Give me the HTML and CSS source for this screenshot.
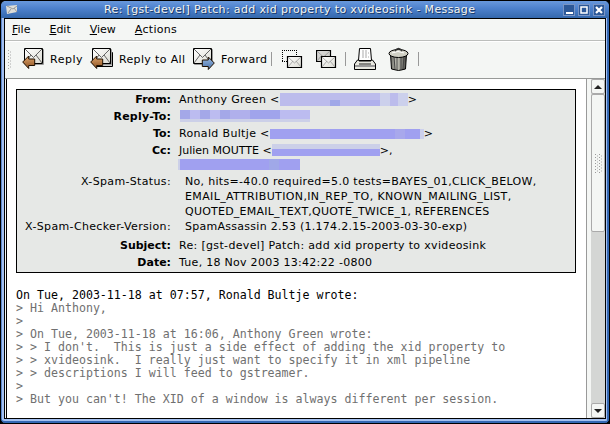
FILE: index.html
```html
<!DOCTYPE html>
<html lang="en"><head><meta charset="utf-8"><title>Message</title><link rel="stylesheet" href="styles.css"></head>
<body>
<svg class="defs"><defs>
<linearGradient id="paper" x2="1" y2="1"><stop stop-color="#fff"/><stop offset="1" stop-color="#dcdcd4"/></linearGradient>
<linearGradient id="brown" x2="0" y2="1"><stop stop-color="#e0a870"/><stop offset="1" stop-color="#8c5020"/></linearGradient>
<linearGradient id="blue" x2="0" y2="1"><stop stop-color="#9cbce4"/><stop offset="1" stop-color="#4870a8"/></linearGradient>
<linearGradient id="can"><stop stop-color="#666660"/><stop offset=".4" stop-color="#c8c8bc"/><stop offset="1" stop-color="#484844"/></linearGradient>
<g id="mail"><path d="M1.500 1.500h18v15h-18z" fill="none" stroke="#999"/><path d="M.5.5h18v15H.5z" fill="url(#paper)" stroke="#000"/><path d="M1 1l8.500 8.500L18 1M1 15l6-8M18 15l-6-8" fill="none" stroke="#555" stroke-width=".9"/></g>
<g id="small"><path d="M.5.500h14v11H.5z" fill="url(#paper)" stroke="#000" stroke-width="1.200"/><path d="M1 1l6.500 6L14 1M1 11l5-6M14 11L9 5" fill="none" stroke="#999" stroke-width=".8"/></g>
<path id="left" d="M.7 7l6-6v3h6v6.500h-6v3z" stroke="#201000"/>
</defs></svg>
<div class="window">
<header class="title"><svg class="tiny" width="12" height="9"><path d="M0 1l11-1v7L1 9z" fill="#deded8"/><path d="M1 1l6 3 4-3M2 8l3-4M11 7L8 3" stroke="#999" fill="none"/></svg><span class="caption">Re: [gst-devel] Patch: add xid property to xvideosink - Message</span>
<div class="controls"><b><svg width="12" height="12"><path d="M3 8h7v2H3z" fill="#fff"/></svg></b><b><svg width="12" height="12"><path d="M3 3h6v6H3z" stroke="#fff" stroke-width="1.500" fill="none"/></svg></b><b><svg width="12" height="12"><path d="M3 3l6 6M9 3l-6 6" stroke="#fff" stroke-width="2.200"/></svg></b></div></header>
<div class="inside">
<nav class="menu"><span><u>F</u>ile</span><span><u>E</u>dit</span><span><u>V</u>iew</span><span class="act"><u>A</u>ctions</span></nav>
<div class="toolbar"><svg class="grip" width="4" height="19"><path d="M.5 0v19" stroke="#aaa" stroke-dasharray="1 2"/><path d="M2.500 1.500v17" stroke="#aaa" stroke-dasharray="1 2"/></svg>
<svg class="i1" width="22" height="23"><use href="#mail" x="2"/><use href="#left" y="7" fill="url(#brown)"/></svg><span class="t1">Reply</span>
<svg class="i2" width="24" height="23"><path d="M6.500 4.500h16v14h-16z" fill="#ccc" stroke="#000"/><path d="M4.500 2.500h16v14h-16z" fill="#ddd" stroke="#000"/><use href="#mail" x="2"/><use href="#left" y="7" fill="url(#brown)"/></svg><span class="t2">Reply to All</span>
<svg class="i3" width="23" height="23"><use href="#mail"/><use href="#left" transform="translate(22 8) scale(-1 1)" fill="url(#blue)"/></svg><span class="t3">Forward</span>
<i class="sep s1"></i>
<svg class="i4" width="21" height="19"><path d="M0 .500h15M0 11.500h5M.500 0v12M14.500 0v6" fill="none" stroke="#000" stroke-dasharray="1 1" shape-rendering="crispEdges"/><use href="#small" x="5" y="6"/></svg>
<svg class="i5" width="21" height="19"><use href="#small"/><path d="M1 1h13v10H1z" fill="#888" opacity=".3"/><use href="#small" x="5" y="6"/></svg>
<i class="sep s2"></i>
<svg class="i6" width="23" height="23"><path d="M5.500.5h11l1 12h-13z" fill="#fff" stroke="#000"/><path d="M8 3h6M8 5h7M8 7h6M8 9h7" stroke="#aaa" stroke-dasharray="2 1"/><path d="M3.500 12h1.500v1h12v-1h1.500l3 4v5.500H.5V16z" fill="#e8e8e0" stroke="#000"/><path d="M1 17h20v2H1z" fill="#999"/><path d="M5 16h12" stroke="#222"/></svg>
<svg class="i7" width="22" height="25"><path d="M2.500 7h16l-1 15q-7 3-14 0z" fill="url(#can)" stroke="#000"/><path d="M6 10l1 12M9 10v13M13 10v13M16 9l-1 13" stroke="#444"/><ellipse cx="10.500" cy="6.500" rx="9.500" ry="4" fill="#d0d0c4" stroke="#000"/><path d="M4 6q6-3 12 0" fill="none" stroke="#fff"/><path d="M7 4q3.500-5 7 0" fill="none" stroke="#333" stroke-width="1.500"/></svg>
<i class="sep s3"></i></div>
<main class="view"><article class="message">
<section class="headers">
<b>From:</b><p class="wide">Anthony Green &lt;<i class="mask m1"></i>&gt;</p>
<b class="reply">Reply-To:</b><p><i class="mask m2"></i></p>
<b>To:</b><p class="wide">Ronald Bultje &lt;<i class="mask m3"></i>&gt;</p>
<b>Cc:</b><p>Julien MOUTTE &lt;<i class="mask m4"></i>&gt;,</p>
<b></b><p><i class="mask m5"></i></p>
<span>X-Spam-Status:</span><p class="extra"><span class="e1">No, hits=-40.0 required=5.0 tests=BAYES_01,CLICK_BELOW,</span><br><span class="e2">EMAIL_ATTRIBUTION,IN_REP_TO, KNOWN_MAILING_LIST,</span><br><span class="e3">QUOTED_EMAIL_TEXT,QUOTE_TWICE_1, REFERENCES</span></p>
<span>X-Spam-Checker-Version:</span><p class="extra e4">SpamAssassin 2.53 (1.174.2.15-2003-03-30-exp)</p>
<b>Subject:</b><p class="subject">Re: [gst-devel] Patch: add xid property to xvideosink</p>
<b>Date:</b><p class="date">Tue, 18 Nov 2003 13:42:22 -0800</p>
</section>
<pre><span>On Tue, 2003-11-18 at 07:57, Ronald Bultje wrote:</span>
&gt; Hi Anthony,
&gt;
&gt; On Tue, 2003-11-18 at 16:06, Anthony Green wrote:
&gt; &gt; I don't.  This is just a side effect of adding the xid property to
&gt; &gt; xvideosink.  I really just want to specify it in xml pipeline
&gt; &gt; descriptions I will feed to gstreamer.
&gt;
&gt; But you can't! The XID of a window is always different per session.</pre>
</article>
<aside class="scroll"><i class="arrow up"></i><div class="thumb"><svg width="7" height="19"><path d="M.5 0v19M4.500 0v19" stroke="#999" stroke-dasharray="1 2"/><path d="M2.500 1.500v17M6.500 1.500v17" stroke="#aaa" stroke-dasharray="1 2"/></svg></div><i class="arrow down"></i></aside></main>
</div></div></body></html>
```
FILE: styles.css
```css
*{box-sizing:border-box}
body{margin:0;background:#000;font:11px/17px "DejaVu Sans",sans-serif;color:#000}
.defs{position:absolute;width:0;height:0}
svg{display:block;flex:none}
.window{width:610px;height:424px;border:1px solid #000;border-radius:6px 6px 5px 5px;background:linear-gradient(90deg,#5c88cc 0 1px,#a4c0f0 1px 4px,#a4c0f0 606px,#3468b4 606px);display:flex;flex-direction:column;overflow:hidden;box-shadow:inset 0 -2px #3468b4}
.title{height:17px;background:linear-gradient(#6898dc,#4c80cc 45%,#3468ac);display:flex;align-items:center;color:#f4f4f0;text-shadow:1px 1px #183868;flex:none}
.tiny{margin-left:5px}
.caption{margin-left:86px;width:374px;white-space:nowrap;letter-spacing:.355px}
.controls{display:flex;gap:3px;margin-left:auto;margin-right:4px}
.controls b{width:12px;height:12px;background:#2c5898;border:1px solid #7894c4}
.controls svg{margin:-1px}
.inside{margin:0 3px;border:1px solid #000;height:401px;background:#f4f6f4;display:flex;flex-direction:column;flex:none}
.menu{height:22px;border-bottom:1px solid #bcbebc;display:flex;padding:2px 0 0 7px;gap:19px;flex:none}
.act{letter-spacing:.3px}
.toolbar{height:38px;border-bottom:1px solid #989a98;display:flex;align-items:center;flex:none;border-top:1px solid #fff;padding-bottom:2px}
.grip{margin-left:3px}
.i1{margin-left:10px}.t1{margin-left:6px;width:34px;letter-spacing:.5px}.i2{margin-left:6px}.t2{margin-left:5px;width:66px;letter-spacing:.35px}.i3{margin-left:8px}.t3{margin-left:5px;width:46px;letter-spacing:.3px}
.sep{width:1px;height:14px;background:#999}.s1{margin-left:4px}.i4{margin-left:10px}.i5{margin-left:13px}.s2{margin-left:8px}.i6{margin-left:8px}.i7{margin-left:11px}.s3{margin-left:8px}
.toolbar span{white-space:nowrap}
.view{flex:1;display:flex;padding-left:1px;min-height:0}
.message{width:581px;border-left:1px solid #000;border-right:1px solid #999;background:#fff;padding:10px 9px}
.headers{width:560px;height:184px;border:1px solid #000;background:#e6e8e6;display:grid;grid-template-columns:154px 1fr;column-gap:8px;grid-template-rows:17px 17px 17px 17px 13px 45px 20px 17px 17px;padding-top:1px}
.headers>b,.headers>span{text-align:right}
.reply{letter-spacing:.2px}
.headers p{margin:0;white-space:nowrap}
.headers p.wide{letter-spacing:.34px}
.headers>span,.headers .extra{line-height:15px;position:relative;top:2px}
.headers>span{letter-spacing:.35px}
.headers .extra{padding-left:6px}
.e1{letter-spacing:.315px}.e2{letter-spacing:.37px}.e3{letter-spacing:.22px}.headers .e4{letter-spacing:.27px}
.headers .subject{letter-spacing:.33px}.headers .date{letter-spacing:.28px}
.mask{display:inline-block;height:13px;vertical-align:top;margin-top:2px;background:#bcbcec}
.m1{width:128px;background:linear-gradient(90deg,transparent 0 50px,#a0a8e8 50px 60px,transparent 60px 80px,#b0b0ec 80px 100px,transparent 100px) 0 7px/100% 6px no-repeat,linear-gradient(90deg,#bcbcec 0 100px,#ccd0ec 100px 110px,#bcbcec 110px 118px,#ccd0ec 118px)}
.m2{width:130px;height:12px;margin-left:1px;background:linear-gradient(transparent 0 9px,#ccd0e8 9px),linear-gradient(90deg,#a4a8e8 0 10px,#bcbcf0 10px 20px,#a4a8e8 20px 30px,#bcbcf0 30px 40px,#a4a8e8 40px 50px,#b0b0ec 50px 70px,#a0a4ec 70px 100px,#bcbcf0 100px)}
.m3{width:154px;height:10px;margin-top:4px;background:linear-gradient(90deg,#a0a0f0 0 50px,#a8a8ec 50px 60px,#a0a0f0 60px 125px,#a8a8ec 125px 135px,#a0a0f0 135px 150px,#ccd0ec 150px)}
.m4{width:108px;height:12px;background:linear-gradient(#ccd0e8 0 5px,#a0a0f0 5px)}
.m5{width:122px;height:11px;margin-left:-1px;margin-top:0;background:linear-gradient(90deg,#ccd0e8 2px,transparent 2px 91px,#a0a8e8 91px 101px,transparent 101px),#a0a0f0}
pre{font:11.610px/13px "DejaVu Sans Mono",monospace;color:#707070;margin:16px 0 0}
pre span{color:#000}
.scroll{margin-left:4px;width:14px;background:#d4d6d4;display:flex;flex-direction:column}
.arrow{height:15px;border:1px solid #aaa;border-radius:2px;background:#f4f6f4;display:flex;align-items:center;justify-content:center;flex:none}
.arrow::before{content:"";border:4px solid transparent;border-top:0;border-bottom:4px solid #222}
.down{margin-top:auto}.down::before{transform:scaleY(-1)}
.thumb{height:138px;border:1px solid #aaa;border-radius:2px;background:#f4f6f4;display:flex;align-items:center;justify-content:center}
```
